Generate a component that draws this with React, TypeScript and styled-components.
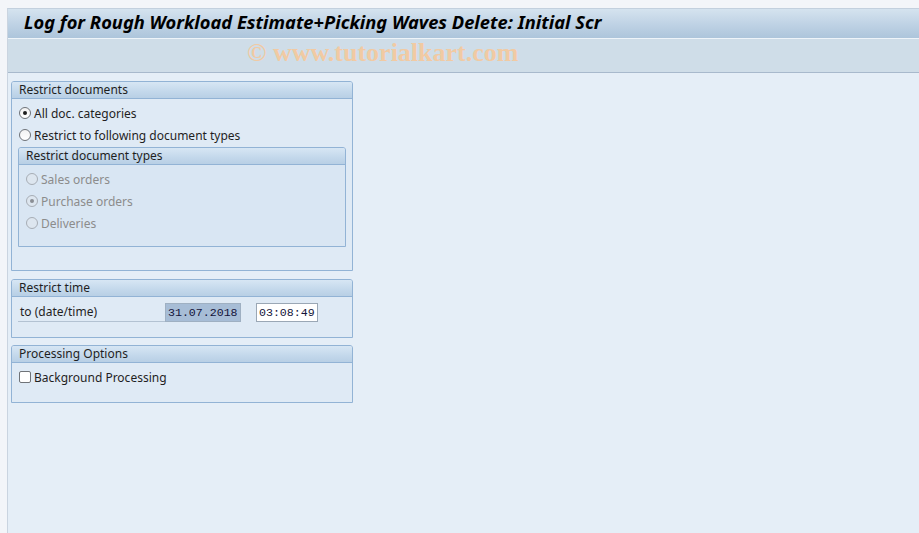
import styled, { createGlobalStyle } from 'styled-components';

const GlobalStyle = createGlobalStyle`
  html, body {
    margin: 0;
    padding: 0;
    background: #f3f5f9;
  }
  body {
    font-family: "Noto Sans", "Liberation Sans", sans-serif;
    font-size: 12px;
    color: #1f1f1f;
  }
`;

type RadioProps = { checked?: boolean; disabled?: boolean };

const Radio = ({ checked, disabled }: RadioProps) => (
  <RadioCircle disabled={disabled}>{checked && <RadioDot disabled={disabled} />}</RadioCircle>
);

const App = () => {
  return (
    <>
      <GlobalStyle />
      <Page>
        <Main>
          <TitleBar>
            <Title>Log for Rough Workload Estimate+Picking Waves Delete: Initial Scr</Title>
          </TitleBar>
          <Toolbar>
            <Watermark>© www.tutorialkart.com</Watermark>
          </Toolbar>
          <Content>
            <Panel height={190}>
              <PanelHeader>Restrict documents</PanelHeader>
              <PanelBody>
                <Row>
                  <Radio checked />
                  <Label>All doc. categories</Label>
                </Row>
                <Row>
                  <Radio />
                  <Label>Restrict to following document types</Label>
                </Row>
                <SubPanel>
                  <PanelHeader>Restrict document types</PanelHeader>
                  <SubBody>
                    <Row>
                      <Radio disabled />
                      <Label disabled>Sales orders</Label>
                    </Row>
                    <Row>
                      <Radio checked disabled />
                      <Label disabled>Purchase orders</Label>
                    </Row>
                    <Row>
                      <Radio disabled />
                      <Label disabled>Deliveries</Label>
                    </Row>
                  </SubBody>
                </SubPanel>
              </PanelBody>
            </Panel>

            <Panel height={59} gapAfter={7}>
              <PanelHeader>Restrict time</PanelHeader>
              <PanelBody>
                <FieldRow>
                  <FieldLabel>to (date/time)</FieldLabel>
                  <InputBox selected width={76}>31.07.2018</InputBox>
                  <InputBox width={62}>03:08:49</InputBox>
                </FieldRow>
              </PanelBody>
            </Panel>

            <Panel height={58}>
              <PanelHeader>Processing Options</PanelHeader>
              <PanelBody>
                <Row>
                  <Checkbox />
                  <Label>Background Processing</Label>
                </Row>
              </PanelBody>
            </Panel>
          </Content>
        </Main>
      </Page>
    </>
  );
};

export default App;

const Page = styled.div`
  width: 919px;
  height: 533px;
  padding: 8px 0 0 7px;
  box-sizing: border-box;
  display: flex;
  overflow: hidden;
`;

const Main = styled.div`
  flex: 1;
  display: flex;
  flex-direction: column;
  border-left: 1px solid #cad4e0;
  border-top: 1px solid #c3d0de;
  background: #e5eef7;
`;

const TitleBar = styled.div`
  height: 30px;
  display: flex;
  align-items: center;
  padding: 0 0 4px 16px;
  box-sizing: border-box;
  background: linear-gradient(to bottom, #d5e3ef 0%, #c0d3e5 50%, #adc5db 100%);
  border-bottom: 1px solid #eef4f9;
`;

const Title = styled.h1`
  margin: 0;
  font-family: "Noto Sans", "Liberation Sans", sans-serif;
  font-size: 18.3px;
  line-height: 20px;
  font-weight: bold;
  font-style: italic;
  color: #000;
  white-space: nowrap;
`;

const Toolbar = styled.div`
  height: 34px;
  display: flex;
  align-items: center;
  padding: 0 0 6px 239px;
  box-sizing: border-box;
  background: #cfdde8;
  border-bottom: 1px solid #a8b9cc;
`;

const Watermark = styled.span`
  font-family: "Liberation Serif", "DejaVu Serif", serif;
  font-size: 26px;
  font-weight: bold;
  line-height: 26px;
  color: #f1caa3;
  white-space: nowrap;
`;

const Content = styled.div`
  padding: 8px 0 0 3px;
  display: flex;
  flex-direction: column;
`;

const Panel = styled.div<{ height: number; gapAfter?: number }>`
  width: 342px;
  height: ${({ height }) => height}px;
  margin-bottom: ${({ gapAfter = 8 }) => gapAfter}px;
  box-sizing: border-box;
  border: 1px solid #92b3d5;
  border-radius: 3px 3px 0 0;
  background: #dfeaf5;
  display: flex;
  flex-direction: column;
`;

const PanelHeader = styled.div`
  height: 16px;
  line-height: 16px;
  padding-left: 7px;
  background: linear-gradient(to bottom, #d7e6f4 0%, #c3d8eb 60%, #b8cfe5 100%);
  border-bottom: 1px solid #92b3d5;
  border-radius: 2px 2px 0 0;
  color: #1f1f1f;
  white-space: nowrap;
`;

const PanelBody = styled.div`
  padding: 3px 6px 0 7px;
  display: flex;
  flex-direction: column;
`;

const SubPanel = styled.div`
  margin: 1px 0 0 -1px;
  height: 100px;
  box-sizing: border-box;
  border: 1px solid #92b3d5;
  border-radius: 3px 3px 0 0;
  background: #d9e6f3;
`;

const SubBody = styled.div`
  padding: 3px 0 0 7px;
  display: flex;
  flex-direction: column;
`;

const Row = styled.div`
  height: 22px;
  display: flex;
  align-items: center;
  gap: 3px;
`;

const Label = styled.span<{ disabled?: boolean }>`
  color: ${({ disabled }) => (disabled ? '#8c8c8c' : '#1f1f1f')};
  white-space: nowrap;
`;

const RadioCircle = styled.span<{ disabled?: boolean }>`
  width: 12px;
  height: 12px;
  box-sizing: border-box;
  border-radius: 50%;
  border: 1px solid ${({ disabled }) => (disabled ? '#a7adb5' : '#6f7378')};
  background: ${({ disabled }) =>
    disabled ? '#dde6ef' : 'linear-gradient(to bottom, #f2f2f2, #ffffff)'};
  display: flex;
  align-items: center;
  justify-content: center;
  flex-shrink: 0;
`;

const RadioDot = styled.span<{ disabled?: boolean }>`
  width: 4px;
  height: 4px;
  border-radius: 50%;
  background: ${({ disabled }) => (disabled ? '#8a8e94' : '#1e1e1e')};
`;

const Checkbox = styled.span`
  width: 12px;
  height: 12px;
  box-sizing: border-box;
  border: 1px solid #6f7378;
  border-radius: 2px;
  background: #ffffff;
  flex-shrink: 0;
`;

const FieldRow = styled.div`
  height: 22px;
  display: flex;
  align-items: center;
  margin: 1px 0 0 -1px;
`;

const FieldLabel = styled.span`
  width: 145px;
  height: 18px;
  line-height: 18px;
  padding-left: 2px;
  box-sizing: content-box;
  border-bottom: 1px solid #b3c2d2;
  white-space: nowrap;
`;

const InputBox = styled.span<{ selected?: boolean; width: number }>`
  width: ${({ width }) => width}px;
  height: 19px;
  box-sizing: border-box;
  margin-right: 15px;
  padding-left: 2px;
  line-height: 17px;
  font-family: "Liberation Mono", "DejaVu Sans Mono", monospace;
  font-size: 11.6px;
  color: #14143a;
  border: 1px solid ${({ selected }) => (selected ? '#9fb0c2' : '#9aa7b5')};
  background: ${({ selected }) => (selected ? '#a7bdd6' : '#ffffff')};
  white-space: nowrap;
`;
